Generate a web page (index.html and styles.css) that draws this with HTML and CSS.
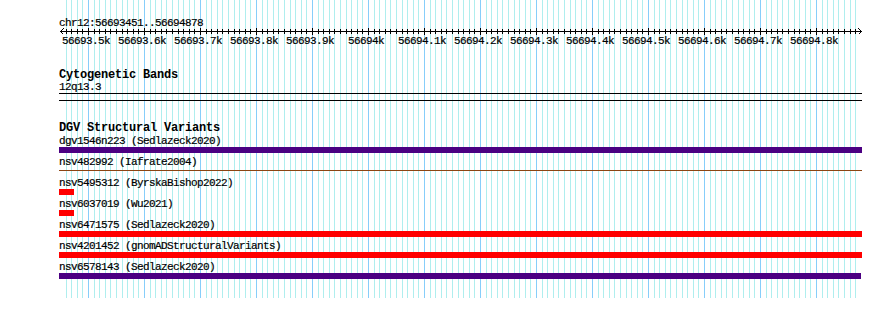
FILE: index.html
```html
<!DOCTYPE html>
<html>
<head>
<meta charset="utf-8">
<link rel="stylesheet" href="styles.css">
</head>
<body>
<div class="page">
  <svg class="grid" width="890" height="298" shape-rendering="crispEdges">
    <defs>
      <pattern id="gridpat" x="66" y="0" width="56" height="298" patternUnits="userSpaceOnUse">
        <rect x="0" y="0" width="1" height="298" class="minor"/>
        <rect x="5" y="0" width="1" height="298" class="minor"/>
        <rect x="11" y="0" width="1" height="298" class="minor"/>
        <rect x="16" y="0" width="1" height="298" class="minor"/>
        <rect x="22" y="0" width="1" height="298" class="major"/>
        <rect x="28" y="0" width="1" height="298" class="minor"/>
        <rect x="33" y="0" width="1" height="298" class="minor"/>
        <rect x="39" y="0" width="1" height="298" class="minor"/>
        <rect x="44" y="0" width="1" height="298" class="minor"/>
        <rect x="50" y="0" width="1" height="298" class="minor"/>
      </pattern>
    </defs>
    <rect x="61" y="0" width="795" height="298" fill="url(#gridpat)"/>
  </svg>

  <div class="panel">
    <section class="ruler">
      <div class="chrom">chr12:56693451..56694878</div>
      <svg class="scale" width="803" height="7" shape-rendering="crispEdges">
        <defs>
          <pattern id="tickpat" x="7" y="0" width="56" height="7" patternUnits="userSpaceOnUse">
            <rect x="0" y="1" width="1" height="5"/>
            <rect x="5" y="1" width="1" height="5"/>
            <rect x="11" y="1" width="1" height="5"/>
            <rect x="16" y="1" width="1" height="5"/>
            <rect x="22" y="0" width="1" height="7"/>
            <rect x="28" y="1" width="1" height="5"/>
            <rect x="33" y="1" width="1" height="5"/>
            <rect x="39" y="1" width="1" height="5"/>
            <rect x="44" y="1" width="1" height="5"/>
            <rect x="50" y="1" width="1" height="5"/>
          </pattern>
        </defs>
        <rect x="1" y="3" width="802" height="1" fill="#000"/>
        <rect x="2" y="0" width="795" height="7" fill="url(#tickpat)"/>
        <path class="arrow" d="M4.5 0.5 L1.5 3.5 L4.5 6.5 M799.5 0.5 L802.5 3.5 L799.5 6.5"/>
      </svg>
      <div class="ticks">
        <span>56693.5k</span><span>56693.6k</span><span>56693.7k</span><span>56693.8k</span><span>56693.9k</span><span>56694k</span><span>56694.1k</span><span>56694.2k</span><span>56694.3k</span><span>56694.4k</span><span>56694.5k</span><span>56694.6k</span><span>56694.7k</span><span>56694.8k</span>
      </div>
    </section>

    <section class="track cyto">
      <h2 class="track-title">Cytogenetic Bands</h2>
      <div class="txt">12q13.3</div>
      <div class="band"></div>
    </section>

    <section class="track dgv">
      <h2 class="track-title">DGV Structural Variants</h2>
      <div class="feat">
        <div class="txt">dgv1546n223 (Sedlazeck2020)</div>
        <div class="bar"><div class="fill indigo" style="width:803px"></div></div>
      </div>
      <div class="feat">
        <div class="txt">nsv482992 (Iafrate2004)</div>
        <div class="bar line"><div class="stroke brown" style="width:803px"></div></div>
      </div>
      <div class="feat">
        <div class="txt">nsv5495312 (ByrskaBishop2022)</div>
        <div class="bar"><div class="fill red" style="width:15px"></div></div>
      </div>
      <div class="feat">
        <div class="txt">nsv6037019 (Wu2021)</div>
        <div class="bar"><div class="fill red" style="width:15px"></div></div>
      </div>
      <div class="feat">
        <div class="txt">nsv6471575 (Sedlazeck2020)</div>
        <div class="bar"><div class="fill red" style="width:803px"></div></div>
      </div>
      <div class="feat">
        <div class="txt">nsv4201452 (gnomADStructuralVariants)</div>
        <div class="bar"><div class="fill red" style="width:803px"></div></div>
      </div>
      <div class="feat">
        <div class="txt">nsv6578143 (Sedlazeck2020)</div>
        <div class="bar"><div class="fill indigo" style="width:802px"></div></div>
      </div>
    </section>
  </div>
</div>
</body>
</html>
```

FILE: styles.css
```css
* {
  box-sizing: border-box;
}

body {
  margin: 0;
  background: #ffffff;
  color: #000000;
  font-family: "Liberation Mono", "DejaVu Sans Mono", monospace;
}

.page {
  position: relative;
  width: 890px;
  height: 315px;
  overflow: hidden;
}

.grid {
  position: absolute;
  left: 0;
  top: 0;
  display: block;
}

.grid .minor {
  fill: #afeeee;
}

.grid .major {
  fill: #87cefa;
}

.panel {
  position: relative;
  margin-left: 59px;
  width: 803px;
  padding-top: 18px;
}

.chrom {
  font-size: 11px;
  line-height: 10px;
  height: 10px;
  letter-spacing: -0.6px;
  white-space: pre;
  -webkit-text-stroke: 0.2px #000;
}

.scale {
  display: block;
}

.scale .arrow {
  fill: none;
  stroke: #000;
  stroke-width: 1;
}

.ticks {
  display: grid;
  grid-template-columns: repeat(14, 56px);
  margin-left: -1px;
  font-size: 11px;
  line-height: 12px;
  height: 12px;
  letter-spacing: -0.6px;
  white-space: pre;
  -webkit-text-stroke: 0.2px #000;
}

.ticks span {
  text-align: center;
}

.track-title {
  margin: 0;
  font-size: 12px;
  font-weight: bold;
  line-height: 12px;
  height: 12px;
  letter-spacing: -0.2px;
  white-space: pre;
}

.txt {
  font-size: 11px;
  line-height: 12px;
  height: 12px;
  letter-spacing: -0.6px;
  white-space: pre;
  -webkit-text-stroke: 0.2px #000;
}

.cyto {
  margin-top: 22px;
}

.band {
  height: 8px;
  border-top: 1px solid #000;
  border-bottom: 1px solid #000;
}

.dgv {
  margin-top: 21px;
}

.dgv .track-title {
  margin-bottom: 1px;
}

.bar {
  height: 6px;
  margin-bottom: 3px;
}

.bar.line {
  padding-top: 2px;
}

.fill {
  height: 6px;
}

.stroke {
  height: 1px;
}

.indigo {
  background: #4b0082;
}

.red {
  background: #ff0000;
}

.brown {
  background: #8b4513;
}
```
